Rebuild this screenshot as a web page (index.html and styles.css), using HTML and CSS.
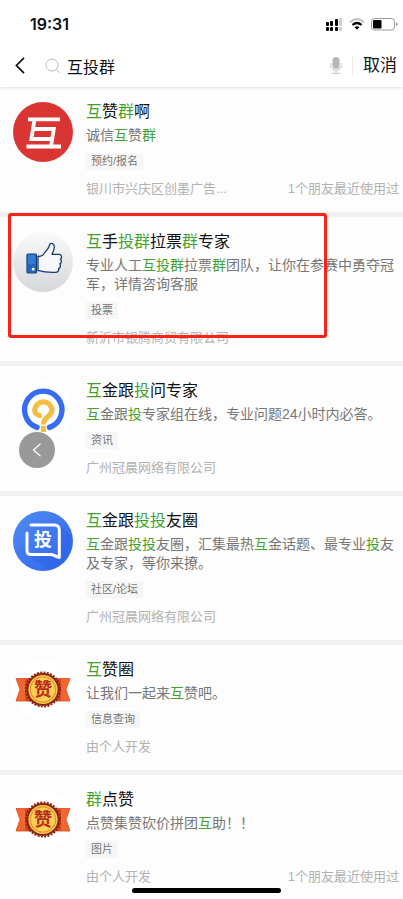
FILE: index.html
```html
<!DOCTYPE html>
<html lang="zh-CN">

<head>
  <meta charset="utf-8">
  <title>互投群</title>
  <meta name="viewport" content="width=device-width, initial-scale=1.0">
  <link rel="stylesheet" href="styles.css">
</head>

<body>
  <header class="header">
    <div class="status-bar">
      <span class="time">19:31</span>
      <div class="status-icons">
        <svg width="17" height="13" viewBox="0 0 17 13">
          <g fill="#000">
            <rect x="0" y="4" width="3" height="4" rx="1" />
            <rect x="4" y="3" width="3" height="5" rx="1" />
            <rect x="9" y="1" width="3" height="7" rx="1" />
            <rect x="0" y="9" width="3" height="4" rx="1" />
            <rect x="4" y="9" width="3" height="4" rx="1" />
            <rect x="9" y="9" width="3" height="4" rx="1" />
          </g>
          <g fill="#d0d0d0">
            <rect x="13" y="0" width="3" height="8" rx="1" />
            <rect x="13" y="9" width="3" height="4" rx="1" />
          </g>
        </svg>
        <svg width="16" height="12" viewBox="0 0 16 12" fill="none">
          <path d="M1 4.2Q8-2 15 4.2" stroke="#c6c6c6" stroke-width="2.2" />
          <path d="M3.4 7Q8 3 12.6 7" stroke="#000" stroke-width="2.2" />
          <path d="M5.6 9.2Q8 7.3 10.4 9.2L8 11.8z" fill="#000" />
        </svg>
        <svg width="27" height="13" viewBox="0 0 27 13">
          <rect x="0.5" y="0.5" width="23" height="11.5" rx="3" fill="#fff" stroke="#999" />
          <rect x="2" y="2" width="8.5" height="8.5" rx="1.2" fill="#000" />
          <path d="M25 4.3q1.6 0.4 1.6 2t-1.6 2z" fill="#999" />
        </svg>
      </div>
    </div>
    <form class="search-bar">
      <button type="button" class="back" aria-label="返回">
        <svg width="10" height="17" viewBox="0 0 10 17" fill="none" stroke="#111" stroke-width="1.7">
          <path d="M9 0.8L1.4 8.5L9 16.2" />
        </svg>
      </button>
      <label class="search-label" for="search" aria-label="搜索">
        <svg width="16" height="16" viewBox="0 0 16 16" fill="none" stroke="#bdbdbd" stroke-width="1">
          <circle cx="7" cy="7" r="6" />
          <path d="M11.3 11.3L15 15" />
        </svg>
      </label>
      <input type="text" id="search" class="search-input" value="互投群">
      <button type="button" class="mic" aria-label="语音">
        <svg width="12" height="17" viewBox="0 0 12 17" fill="none" stroke="#c4c4c4">
          <rect x="2.5" y="0" width="7" height="12" rx="3.5" fill="#b8b8b8" stroke="none" />
          <path d="M0.8 6v2.5a5.2 5 0 0 0 10.4 0V6M6 13.5V16M1.5 16.3h9" />
        </svg>
      </button>
      <button type="button" class="cancel">取消</button>
    </form>
  </header>

  <main class="results">
    <article class="card">
      <svg class="avatar" viewBox="0 0 60 60">
        <circle cx="30" cy="30" r="30" fill="#d93532" />
        <g fill="none" stroke="#fff" stroke-width="3.8">
          <path d="M15 17.3h32M13.500 44.500h34.500" />
          <path d="M21.500 17.300L18.400 37H38.500M20.200 27H40.800L38 44.500" />
        </g>
      </svg>
      <div class="content">
        <h2 class="title"><em>互</em>赞<em>群</em>啊</h2>
        <p class="desc">诚信<em>互</em>赞<em>群</em></p>
        <span class="tag">预约/报名</span>
        <div class="meta">
          <span>银川市兴庆区创墨广告...</span>
          <span>1个朋友最近使用过</span>
        </div>
      </div>
    </article>

    <article class="card">
      <svg class="avatar" viewBox="0 0 60 60">
        <defs>
          <linearGradient id="silver" x1="0" y1="0" x2="0" y2="1">
            <stop offset="0" stop-color="#fafafa" />
            <stop offset="1" stop-color="#d5d7dc" />
          </linearGradient>
        </defs>
        <circle cx="30" cy="30" r="30" fill="url(#silver)" />
        <rect x="14" y="22" width="9.5" height="19" rx="1" fill="#347bd3" stroke="#173a70" stroke-width="1.2" />
        <path d="M14.6 32h8.3v8.4h-8.3z" fill="#2862bd" />
        <circle cx="20.2" cy="37.2" r="1.4" fill="#fff" />
        <path d="M25 24.5c3 0 5-1 6.5-3.5c1.8-2.7 4.5-4.3 5.2-8.3c0.5-2.4 5-1.2 4.6 2.8c-0.3 3-1.6 5-2.3 6.9h7.5c2.5 0.3 2.6 3.6 0.9 4.7c1.6 1.3 1.2 4-0.6 4.8c1.2 1.5 0.7 3.9-1.2 4.6c0.5 2.5-1 3.9-3.3 3.9c-6 0.2-11.3 0-17.3-2z" fill="#f7f8fb" stroke="#173a70" stroke-width="1.3" stroke-linejoin="round" />
      </svg>
      <div class="content">
        <h2 class="title"><em>互</em>手<em>投群</em>拉票<em>群</em>专家</h2>
        <p class="desc">专业人工<em>互投群</em>拉票<em>群</em>团队，让你在参赛中勇夺冠军，详情咨询客服</p>
        <span class="tag">投票</span>
        <div class="meta">
          <span>新沂市银腾商贸有限公司</span>
        </div>
      </div>
      <div class="highlight"></div>
    </article>

    <article class="card">
      <svg class="avatar" viewBox="0 0 60 60">
        <circle cx="30" cy="30" r="30" fill="#fff" />
        <path d="M24 46.4A18.700 18.700 0 1 1 36.500 46.400" fill="none" stroke="#366cf2" stroke-width="5.4" stroke-linecap="round" />
        <path d="M28.500 34.500C24 35 21.500 32 21.700 28.500A8.700 8.700 0 0 1 39 29C39 36 30.400 35 30.400 43.500" fill="none" stroke="#f7bd43" stroke-width="5.2" />
        <path d="M27.800 45h5.200v6h-5.200z" fill="#f7bd43" />
      </svg>
      <div class="content">
        <h2 class="title"><em>互</em>金跟<em>投</em>问专家</h2>
        <p class="desc"><em>互</em>金跟<em>投</em>专家组在线，专业问题24小时内必答。</p>
        <span class="tag">资讯</span>
        <div class="meta">
          <span>广州冠晨网络有限公司</span>
        </div>
      </div>
    </article>

    <article class="card">
      <svg class="avatar" viewBox="0 0 60 60">
        <defs>
          <linearGradient id="blue" x1="0" y1="0" x2="1" y2="1">
            <stop offset="0" stop-color="#508bf2" />
            <stop offset="1" stop-color="#2f65ef" />
          </linearGradient>
        </defs>
        <circle cx="30" cy="30" r="30" fill="url(#blue)" />
        <path d="M47 15L58 25A30 30 0 0 1 36 59L14 44H47z" fill="#2859dc" opacity="0.3" />
        <path d="M18 14H41.5Q46.300 14 46.300 19V46.500L38.500 43.500H18Q14 43.500 14 39.500V22" fill="none" stroke="#fff" stroke-width="3" stroke-linejoin="round" stroke-linecap="round" />
        <text x="30" y="35" class="badge-text" fill="#fff">投</text>
      </svg>
      <div class="content">
        <h2 class="title"><em>互</em>金跟<em>投投</em>友圈</h2>
        <p class="desc"><em>互</em>金跟<em>投投</em>友圈，汇集最热<em>互</em>金话题、最专业<em>投</em>友及专家，等你来撩。</p>
        <span class="tag">社区/论坛</span>
        <div class="meta">
          <span>广州冠晨网络有限公司</span>
        </div>
      </div>
    </article>

    <article class="card">
      <svg class="avatar" viewBox="0 0 60 60">
        <defs>
          <g id="medal">
            <circle cx="30" cy="30" r="30" fill="#fff" />
            <path d="M3 18.500H57L53 29.500L57 41H3L7 29.500z" fill="#f2672f" stroke="#d94d20" stroke-width="0.8" />
            <path d="M12 19h5v22h-5zM43 19h5v22h-5z" fill="#d9481f" />
            <circle cx="30" cy="29.500" r="16.500" fill="#8c2415" />
            <circle cx="30" cy="29.500" r="17" fill="none" stroke="#8c2415" stroke-width="2" stroke-dasharray="2 1.338" />
            <circle cx="30" cy="29.500" r="14.600" fill="#f9cd50" />
            <circle cx="30" cy="29.500" r="12.600" fill="#fbd055" stroke="#e8952c" stroke-width="1.300" />
            <text x="30" y="36" class="badge-text" fill="#b92c1d">赞</text>
          </g>
        </defs>
        <use href="#medal" />
      </svg>
      <div class="content">
        <h2 class="title"><em>互</em>赞圈</h2>
        <p class="desc">让我们一起来<em>互</em>赞吧。</p>
        <span class="tag">信息查询</span>
        <div class="meta">
          <span>由个人开发</span>
        </div>
      </div>
    </article>

    <article class="card">
      <svg class="avatar" viewBox="0 0 60 60">
        <use href="#medal" />
      </svg>
      <div class="content">
        <h2 class="title"><em>群</em>点赞</h2>
        <p class="desc">点赞集赞砍价拼团<em>互</em>助！！</p>
        <span class="tag">图片</span>
        <div class="meta">
          <span>由个人开发</span>
          <span>1个朋友最近使用过</span>
        </div>
      </div>
    </article>
  </main>

  <button type="button" class="float-back" aria-label="返回">
    <svg width="10" height="14" viewBox="0 0 10 14" fill="none" stroke="#fff" stroke-width="1.2">
      <path d="M8.5 0.8L1.5 7L8.5 13.2" />
    </svg>
  </button>
  <div class="home-indicator"></div>
</body>

</html>
```

FILE: styles.css
```css
* {
  box-sizing: border-box;
}

body {
  margin: 0;
  background-color: #fdfdfd;
  font-family: "Liberation Sans", "Noto Sans CJK SC", sans-serif;
  color: #111;
}

svg {
  display: block;
}

button {
  border: none;
  background: none;
  padding: 0;
  font-family: inherit;
  color: inherit;
  cursor: pointer;
}

em {
  font-style: normal;
  color: #43a22e;
}

/* header */
.header {
  position: relative;
  background-color: #fff;
  box-shadow: 0 1px 3px rgba(0, 0, 0, 0.12);
}

.status-bar {
  display: flex;
  justify-content: space-between;
  align-items: center;
  padding: 12px 5px 8px 30px;
}

.time {
  font-family: Inter, sans-serif;
  font-size: 16px;
  line-height: 24px;
  font-weight: 600;
}

.status-icons {
  display: flex;
  align-items: center;
  gap: 6px;
}

.search-bar {
  display: flex;
  align-items: center;
  height: 43px;
  padding: 0 6px 0 15px;
}

.search-label {
  margin: 0 6px 0 20px;
}

.search-input {
  flex: 1;
  min-width: 0;
  height: 24px;
  border: none;
  outline: none;
  padding: 0;
  background: none;
  font-family: inherit;
  font-size: 16px;
  color: #111;
}

.mic {
  margin-right: 10px;
}

.cancel {
  border-left: 1px solid #ececec;
  padding-left: 10px;
  font-size: 17px;
  line-height: 20px;
}

/* result list */
.card {
  position: relative;
  display: flex;
  gap: 13px;
  padding: 13px 4px 14px 13px;
  border-bottom: 5px solid #f1f1f1;
}

.card:last-child {
  padding-bottom: 13px;
  border-bottom: none;
}

.avatar {
  flex: none;
  width: 60px;
  height: 60px;
  margin-top: 2px;
}

.badge-text {
  font-size: 18px;
  font-weight: bold;
  text-anchor: middle;
}

.content {
  flex: 1;
  min-width: 0;
}

.title {
  margin: 0 0 2px;
  font-size: 16px;
  line-height: 24px;
  font-weight: normal;
}

.desc {
  margin: 0 0 8px;
  font-size: 14px;
  line-height: 19px;
  color: #777;
}

.tag {
  display: block;
  width: fit-content;
  padding: 0 5px;
  background-color: #f6f6f6;
  font-size: 11px;
  line-height: 17px;
  color: #777;
}

.meta {
  display: flex;
  justify-content: space-between;
  margin-top: 10px;
  font-size: 13px;
  line-height: 18px;
  color: #b2b2b2;
}

.highlight {
  position: absolute;
  top: -4px;
  left: 8px;
  right: 76px;
  height: 125px;
  border: 3px solid #fb2316;
  border-radius: 3px;
}

/* floating parts */
.float-back {
  position: fixed;
  top: 432px;
  left: 19px;
  display: flex;
  justify-content: center;
  align-items: center;
  width: 36px;
  height: 36px;
  border-radius: 50%;
  background-color: #999;
}

.home-indicator {
  position: fixed;
  bottom: 6px;
  left: 132px;
  width: 149px;
  height: 5px;
  border-radius: 3px;
  background-color: #000;
}
```
